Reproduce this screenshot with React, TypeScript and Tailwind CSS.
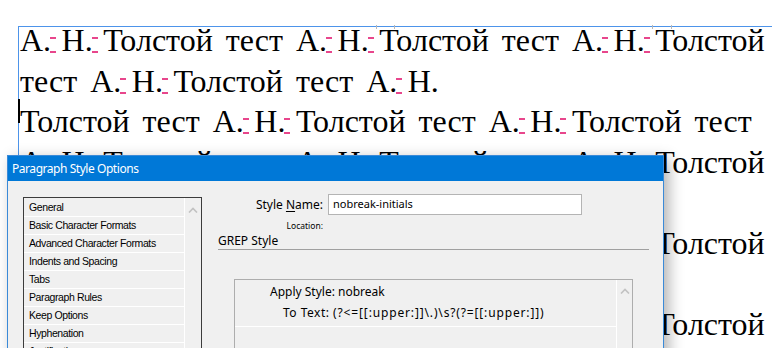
import React from "react";

function Nb() {
  return (
    <span className="relative [word-spacing:2.5px]">
      {"\u00a0"}
      <span className="absolute left-[-1px] top-[15px] h-[2px] w-[6px] bg-[#e8468c]" />
      <span className="absolute left-[-1px] top-[29px] h-[2px] w-[6px] bg-[#e8468c]" />
    </span>
  );
}

function AN() {
  return (
    <>
      А.<Nb />Н.<Nb />Толстой
    </>
  );
}

function Chevron() {
  return (
    <svg width="10" height="6" viewBox="0 0 10 6" className="block">
      <polyline points="1,5.5 5,1.5 9,5.5" fill="none" stroke="#c2c2c2" strokeWidth="1.6" />
    </svg>
  );
}

const listItems = [
  "General",
  "Basic Character Formats",
  "Advanced Character Formats",
  "Indents and Spacing",
  "Tabs",
  "Paragraph Rules",
  "Keep Options",
  "Hyphenation",
  "Justification",
];

export default function App() {
  return (
    <div className="relative h-[348px] w-[772px] overflow-hidden bg-white">
      {/* text frame */}
      <div className="ml-[18px] mt-[26px] h-[400px] border-l border-t border-[#4d94ea]">
        <div className="-mt-[7px] whitespace-nowrap pl-[1px] font-['Liberation_Serif',serif] text-[32px] leading-[40.6px] text-black [word-spacing:5px]">
          <div>
            <AN /> тест <AN /> тест <AN />
          </div>
          <div>
            тест <AN /> тест А.<Nb />Н.
          </div>
          <div>
            Толстой тест <AN /> тест <AN /> тест
          </div>
          <div>
            <AN /> тест <AN /> тест <AN />
          </div>
          <div>
            тест <AN /> тест А.<Nb />Н.
          </div>
          <div>
            <AN /> тест <AN /> тест <AN />
          </div>
          <div>
            тест <AN /> тест А.<Nb />Н.
          </div>
          <div>
            <AN /> тест <AN /> тест <AN />
          </div>
        </div>
      </div>

      {/* frame ticks on top edge */}
      <div className="absolute left-[376px] top-[25px] h-[4px] w-[19px] border-x border-[#b8b8b8]" />
      <div className="absolute left-[652px] top-[25px] h-[4px] w-[20px] border-x border-[#b8b8b8]" />

      {/* text cursor */}
      <div className="absolute left-[18px] top-[99px] h-[24px] w-[2px] bg-black" />

      {/* dialog */}
      <div className="absolute left-[7px] top-[155px] flex h-[320px] w-[657px] flex-col border border-[#3a8ad8] bg-[#f0f0f0] font-['Noto_Sans',sans-serif] text-black shadow-[5px_4px_14px_rgba(0,0,0,0.3)]">
        <div className="flex h-[25px] shrink-0 items-center bg-[#0078d7] pl-[4px] text-[12px] tracking-[-0.45px] text-white">
          Paragraph Style Options
        </div>
        <div className="flex shrink-0 items-start pl-[15px]">
          {/* list */}
          <div className="mt-[16px] flex h-[200px] w-[179px] border border-[#3c3c3c]">
            <div className="w-[160px] pt-[1px]">
              {listItems.map((item) => (
                <div
                  key={item}
                  className="flex h-[18px] items-center border-b border-white pl-[5px] font-['Liberation_Sans',sans-serif] text-[10.5px] tracking-[-0.4px]"
                >
                  {item}
                </div>
              ))}
            </div>
            <div className="flex w-[17px] justify-center border-l border-white pt-[9px]">
              <Chevron />
            </div>
          </div>

          {/* right column */}
          <div className="ml-[16px] mt-[13px] flex w-[431px] flex-col">
            <div className="flex items-center">
              <div className="w-[105px] text-right text-[12px] leading-[21px]">
                Style <span className="underline underline-offset-2">N</span>ame:
              </div>
              <div className="ml-[5px] flex h-[21px] w-[254px] items-center border border-[#b4b4b4] bg-white pl-[4px] text-[11px]">
                nobreak-initials
              </div>
            </div>
            <div className="mt-[5px] h-[12px] w-[105px] text-right text-[8.5px] leading-[12px]">
              Location:
            </div>
            <div className="mt-[2px] h-[14px] text-[12px] leading-[14px]">GREP Style</div>
            <div className="mt-[1px] h-0 border-t border-[#a0a0a0]" />

            <div className="ml-[16px] mt-[29px] flex h-[100px] w-[399px] border border-[#adadad]">
              <div className="w-[381px]">
                <div className="h-[47px] border-b border-white pt-[1px] text-[12px] leading-[21px]">
                  <div className="pl-[35px]">Apply Style: nobreak</div>
                  <div className="whitespace-nowrap pl-[48px]">
                    <span className="tracking-[0.5px]">To Text: </span>
                    <span className="tracking-[0.85px]">(?&lt;=[[:upper:]]\.)\s?(?=[[:upper:]])</span>
                  </div>
                </div>
              </div>
              <div className="flex w-[16px] justify-center border-l border-white pt-[8px]">
                <Chevron />
              </div>
            </div>
          </div>
        </div>
      </div>
    </div>
  );
}
